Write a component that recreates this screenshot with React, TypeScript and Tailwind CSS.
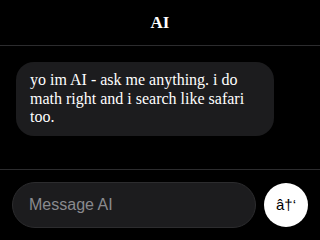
import React from "react";

export default function App() {
  return (
    <div className="w-[320px] h-[240px] bg-black flex flex-col overflow-hidden" style={{ fontFamily: '"Liberation Serif", serif' }}>
      <div className="h-[46px] shrink-0 border-b border-[#2c2c2e] flex items-center justify-center">
        <span className="text-white font-bold text-[17px]">AI</span>
      </div>
      <div className="flex-1 px-4 pt-4">
        <div className="w-[258px] bg-[#1c1c1e] rounded-[18px] px-[14px] py-[9px] text-white text-[16px] leading-[18.5px]">
          yo im AI - ask me anything. i do math right and i search like safari too.
        </div>
      </div>
      <div className="h-[71px] shrink-0 border-t border-[#2c2c2e] px-3 flex items-center gap-2">
        <div className="w-[244px] h-[46px] rounded-full bg-[#1c1c1e] border border-[#2c2c2e] flex items-center pl-4">
          <span className="text-[#8a8a8e] text-[16px]" style={{ fontFamily: '"Liberation Sans", sans-serif' }}>Message AI</span>
        </div>
        <div className="w-[44px] h-[44px] rounded-full bg-white flex items-center justify-center text-black text-[15px]" style={{ fontFamily: '"Liberation Sans", sans-serif' }}>
          â†‘
        </div>
      </div>
    </div>
  );
}
